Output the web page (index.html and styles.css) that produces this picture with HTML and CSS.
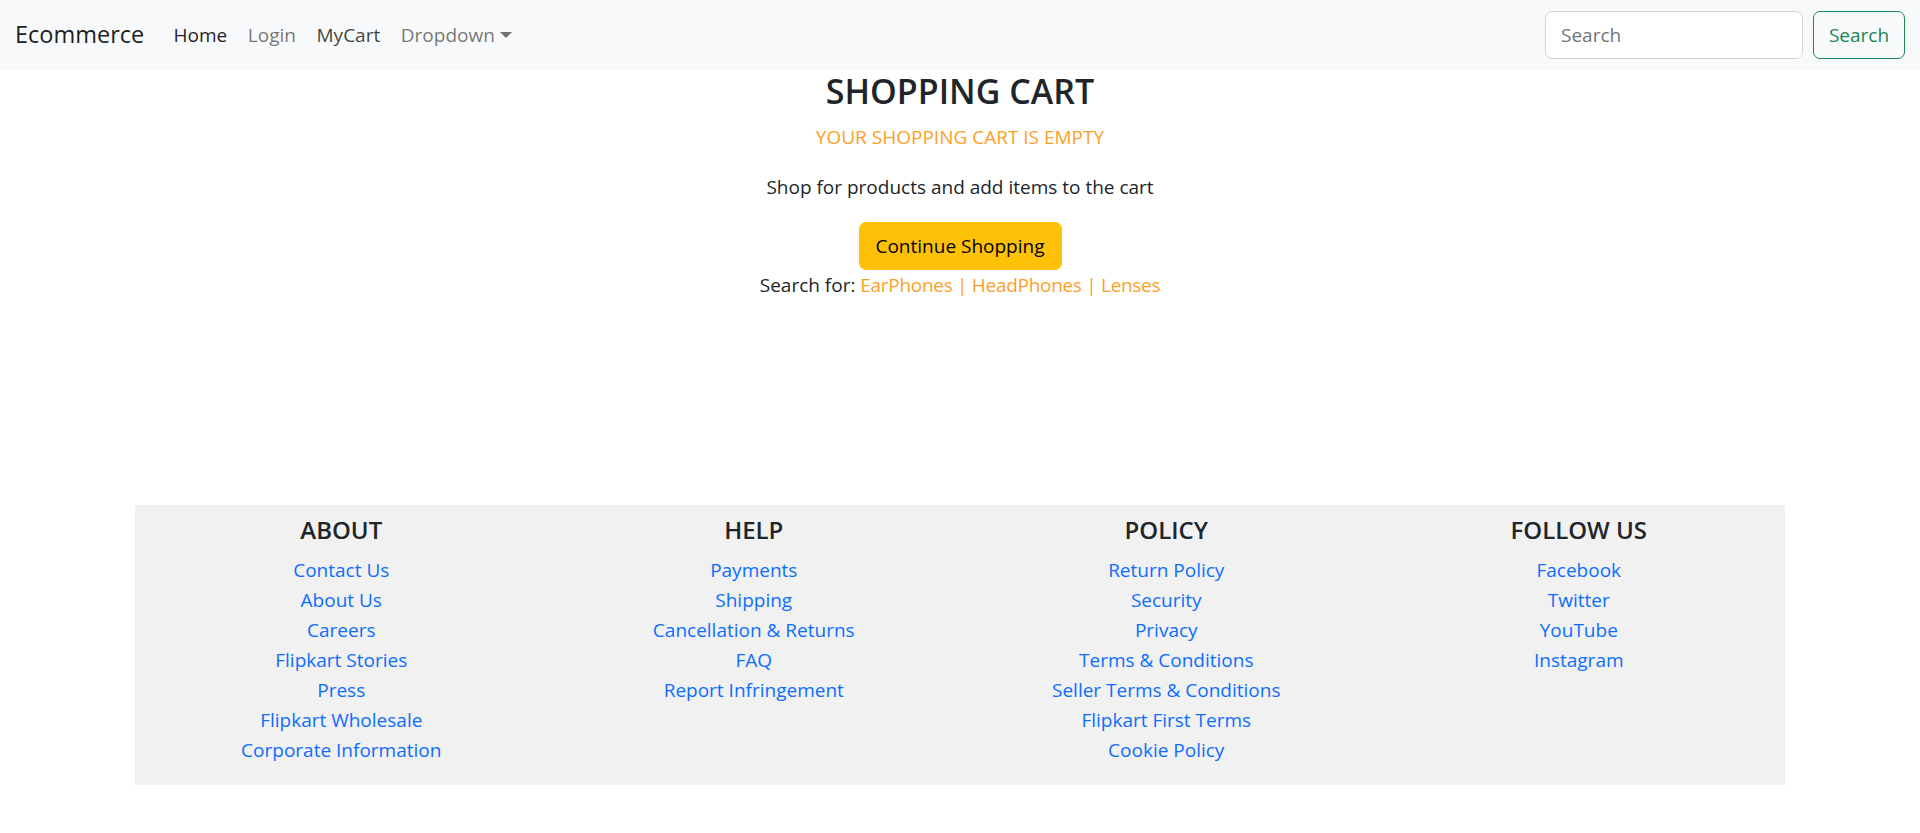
FILE: index.html
```html
<!DOCTYPE html>
<html lang="en">
<head>
<meta charset="utf-8">
<title>Shopping Cart</title>
<link rel="stylesheet" href="styles.css">
</head>
<body>
<nav class="navbar">
  <div class="nav-left">
    <a class="brand" href="#">Ecommerce</a>
    <ul class="nav-links">
      <li><a class="nav-link active" href="#">Home</a></li>
      <li><a class="nav-link" href="#">Login</a></li>
      <li><a class="nav-link mid" href="#">MyCart</a></li>
      <li><a class="nav-link dropdown" href="#">Dropdown</a></li>
    </ul>
  </div>
  <form class="search-form">
    <input class="search-input" type="search" placeholder="Search">
    <button class="search-btn" type="button">Search</button>
  </form>
</nav>

<main class="cart">
  <h2 class="cart-title">SHOPPING CART</h2>
  <p class="cart-empty">YOUR SHOPPING CART IS EMPTY</p>
  <p class="cart-hint">Shop for products and add items to the cart</p>
  <button class="continue-btn" type="button">Continue Shopping</button>
  <p class="search-for">Search for: <span class="search-links"><a href="#">EarPhones</a> | <a href="#">HeadPhones</a> | <a href="#">Lenses</a></span></p>
</main>

<footer class="footer">
  <div class="footer-col">
    <h5>ABOUT</h5>
    <ul>
      <li><a href="#">Contact Us</a></li>
      <li><a href="#">About Us</a></li>
      <li><a href="#">Careers</a></li>
      <li><a href="#">Flipkart Stories</a></li>
      <li><a href="#">Press</a></li>
      <li><a href="#">Flipkart Wholesale</a></li>
      <li><a href="#">Corporate Information</a></li>
    </ul>
  </div>
  <div class="footer-col">
    <h5>HELP</h5>
    <ul>
      <li><a href="#">Payments</a></li>
      <li><a href="#">Shipping</a></li>
      <li><a href="#">Cancellation &amp; Returns</a></li>
      <li><a href="#">FAQ</a></li>
      <li><a href="#">Report Infringement</a></li>
    </ul>
  </div>
  <div class="footer-col">
    <h5>POLICY</h5>
    <ul>
      <li><a href="#">Return Policy</a></li>
      <li><a href="#">Security</a></li>
      <li><a href="#">Privacy</a></li>
      <li><a href="#">Terms &amp; Conditions</a></li>
      <li><a href="#">Seller Terms &amp; Conditions</a></li>
      <li><a href="#">Flipkart First Terms</a></li>
      <li><a href="#">Cookie Policy</a></li>
    </ul>
  </div>
  <div class="footer-col">
    <h5>FOLLOW US</h5>
    <ul>
      <li><a href="#">Facebook</a></li>
      <li><a href="#">Twitter</a></li>
      <li><a href="#">YouTube</a></li>
      <li><a href="#">Instagram</a></li>
    </ul>
  </div>
</footer>
</body>
</html>
```

FILE: styles.css
```css
* { box-sizing: border-box; }

body {
  margin: 0;
  font-family: "Open Sans", "Noto Sans", sans-serif;
  font-size: 19px;
  line-height: 30px;
  color: #212529;
  background: #fff;
}

a { text-decoration: none; }

/* Navbar */
.navbar {
  height: 70px;
  background: #f8f9fa;
  padding: 0 15px;
  display: flex;
  align-items: center;
  justify-content: space-between;
}

.nav-left {
  display: flex;
  align-items: center;
}

.brand {
  font-size: 23.5px;
  color: rgba(0, 0, 0, 0.9);
  margin-right: 19px;
  line-height: 1.5;
}

.nav-links {
  display: flex;
  list-style: none;
  margin: 0;
  padding: 0;
}

.nav-link {
  display: block;
  padding: 8px 10.3px;
  color: rgba(0, 0, 0, 0.55);
}

.nav-link.active { color: rgba(0, 0, 0, 0.9); }
.nav-link.mid { color: rgba(0, 0, 0, 0.75); }

.nav-link.dropdown::after {
  content: "";
  display: inline-block;
  margin-left: 5px;
  vertical-align: 4px;
  border-top: 6px solid;
  border-left: 6px solid transparent;
  border-right: 6px solid transparent;
}

.search-form {
  display: flex;
  align-items: center;
  gap: 10px;
}

.search-input {
  width: 258px;
  height: 48px;
  padding: 7px 15px;
  font: inherit;
  color: #212529;
  background: #fff;
  border: 1px solid #ced4da;
  border-radius: 7px;
  outline: none;
}

.search-input::placeholder { color: #6c757d; }

.search-btn {
  width: 92px;
  height: 48px;
  font: inherit;
  color: #198754;
  background: transparent;
  border: 1px solid #198754;
  border-radius: 7px;
  padding: 0;
}

/* Cart */
.cart {
  text-align: center;
}

.cart-title {
  margin: 1px 0 11px;
  font-size: 34px;
  font-weight: 600;
  line-height: 40px;
}

.cart-empty {
  margin: 0 0 20px;
  color: #fd9f28;
}

.cart-hint {
  margin: 0 0 20px;
}

.continue-btn {
  height: 48px;
  width: 203px;
  padding: 0;
  font: inherit;
  color: #000;
  background: #ffc107;
  border: 1px solid #ffc107;
  border-radius: 7px;
  display: block;
  margin: 0 auto;
}

.search-for {
  margin: 0;
  color: #212529;
}

.search-links {
  color: #fd9f28;
  letter-spacing: -0.3px;
}

.search-links a { color: #fd9f28; }

/* Footer */
.footer {
  width: 1650px;
  margin: 205px auto 0;
  background: #f1f1f1;
  padding-top: 10px;
  display: grid;
  grid-template-columns: repeat(4, 1fr);
  text-align: center;
}

.footer-col h5 {
  margin: 0 0 10px;
  font-size: 24px;
  font-weight: 600;
  line-height: 30px;
}

.footer-col ul {
  list-style: none;
  margin: 0 0 20px;
  padding: 0;
}

.footer-col a { color: #0d6efd; }
```
